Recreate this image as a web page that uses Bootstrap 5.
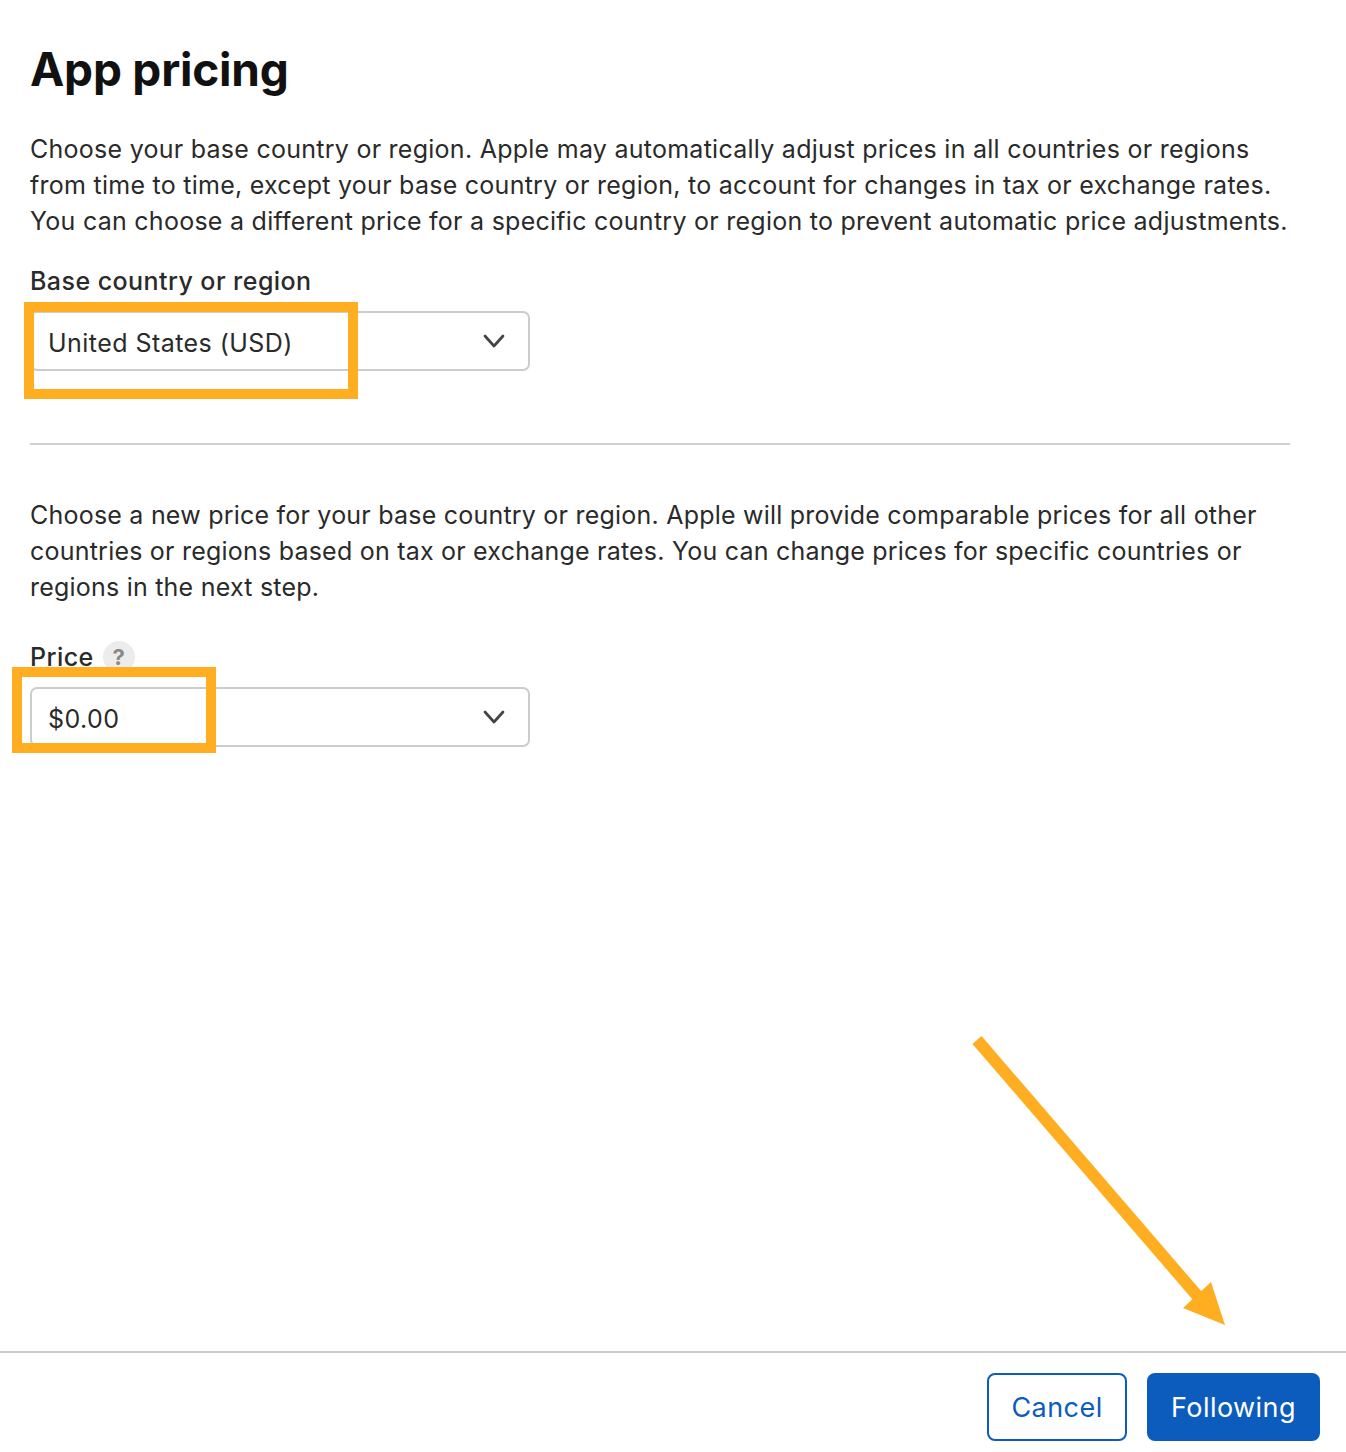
<!DOCTYPE html>
<html lang="en">
<head>
<meta charset="utf-8">
<title>App pricing</title>
<link rel="stylesheet" href="https://cdn.jsdelivr.net/npm/bootstrap@5.3.0/dist/css/bootstrap.min.css">
<style>
html,body{height:1452px;overflow:hidden}
body{font-family:Inter,"Liberation Sans",sans-serif;color:#2a2a2a;background:#fff;position:relative}
.shell{height:1452px}
.body-pane{padding:39px 56px 0 30px}
.page-title{font-size:46px;font-weight:700;line-height:60px;color:#111;margin:0 0 32px;letter-spacing:-.22px}
.copy{font-size:25px;line-height:36px;margin:0;letter-spacing:.26px;white-space:nowrap}
.copy-b{letter-spacing:.22px}
.fld-label{font-size:25px;line-height:36px;letter-spacing:.44px;margin:0;font-weight:500}
.pick{width:500px;height:60px;border:2px solid #ccc;border-radius:7px;padding:0 18px 0 16px;font-size:25px;letter-spacing:.45px;margin-top:12px}
.pick span{padding-top:5px}
.pick svg{width:24px;height:16px;margin-right:4px}
.rule{border:0;border-top:2px solid #d0d0d0;opacity:1;margin:72px 0 52px}
.help-dot{width:32px;height:32px;border-radius:50%;background:#ececec;color:#888;font-size:22px;font-weight:700}
.price-row{margin-top:34px;gap:9px}
.foot-bar{border-top:2px solid #ccc;padding:20px 26px 0 0;gap:20px;height:101px}
.act{font-size:27px;height:68px;border-radius:8px;letter-spacing:.45px;padding:2px 0 0;display:flex;align-items:center;justify-content:center}
.act-ghost{width:140px;border:2px solid #0b5cbd;color:#0b5cbd;background:#fff}
.act-solid{width:173px;border:2px solid #0b5cbd;background:#0b5cbd;color:#fff}
.hilite{position:absolute;border:10px solid #ffae21;pointer-events:none}
.hilite-a{left:24px;top:302px;width:334px;height:97px}
.hilite-b{left:12px;top:667px;width:204px;height:86px}
.arrow-over{position:absolute;left:0;top:0;width:1346px;height:1452px;pointer-events:none}
</style>
</head>
<body>
<div class="shell d-flex flex-column">
  <main class="body-pane flex-grow-1">
    <h1 class="page-title">App pricing</h1>
    <p class="copy">Choose your base country or region. Apple may automatically adjust prices in all countries or regions<br>from time to time, except your base country or region, to account for changes in tax or exchange rates.<br>You can choose a different price for a specific country or region to prevent automatic price adjustments.</p>
    <p class="fld-label mt-4">Base country or region</p>
    <div class="pick d-flex align-items-center justify-content-between"><span>United States (USD)</span><svg viewBox="0 0 24 16" fill="none" stroke="#444" stroke-width="2.7" stroke-linecap="round" stroke-linejoin="round"><path d="M3 3l9 10 9-10"/></svg></div>
    <hr class="rule">
    <p class="copy copy-b">Choose a new price for your base country or region. Apple will provide comparable prices for all other<br>countries or regions based on tax or exchange rates. You can change prices for specific countries or<br>regions in the next step.</p>
    <div class="price-row d-flex align-items-center"><span class="fld-label">Price</span><span class="help-dot d-flex align-items-center justify-content-center">?</span></div>
    <div class="pick d-flex align-items-center justify-content-between"><span>$0.00</span><svg viewBox="0 0 24 16" fill="none" stroke="#444" stroke-width="2.7" stroke-linecap="round" stroke-linejoin="round"><path d="M3 3l9 10 9-10"/></svg></div>
  </main>
  <footer class="foot-bar d-flex justify-content-end align-items-start">
    <button type="button" class="btn act act-ghost">Cancel</button>
    <button type="button" class="btn act act-solid">Following</button>
  </footer>
</div>
<div class="hilite hilite-a"></div>
<div class="hilite hilite-b"></div>
<svg class="arrow-over" viewBox="0 0 1346 1452"><path d="M977 1040L1207 1307" stroke="#ffae21" stroke-width="12" fill="none"/><path d="M1225 1325L1183 1308L1211 1282Z" fill="#ffae21"/></svg>
</body>
</html>
